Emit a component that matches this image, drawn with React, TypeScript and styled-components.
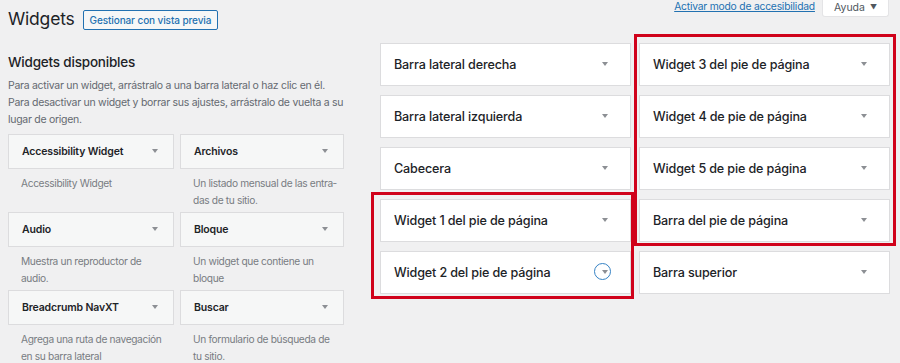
import React from 'react';
import styled, { createGlobalStyle } from 'styled-components';

const GlobalStyle = createGlobalStyle`
  body {
    margin: 0;
    background: #f0f0f1;
    font-family: Inter, "Liberation Sans", sans-serif;
    color: #1d2327;
  }
`;

const Page = styled.div`
  width: 900px;
  height: 363px;
  overflow: hidden;
  padding-left: 8px;
  box-sizing: border-box;
`;

const Header = styled.div`
  display: flex;
  justify-content: space-between;
  align-items: flex-start;
  padding-right: 11px;
`;

const TitleRow = styled.div`
  display: flex;
  align-items: center;
  padding-top: 8px;
`;

const Title = styled.h1`
  margin: 0;
  font-size: 17.5px;
  line-height: 22px;
  font-weight: 400;
  letter-spacing: -0.2px;
`;

const PreviewButton = styled.button`
  margin-left: 8px;
  margin-top: 2px;
  height: 20px;
  padding: 0 6px;
  border: 1px solid #2271b1;
  border-radius: 2px;
  background: #f6f7f7;
  color: #2271b1;
  font-family: inherit;
  font-size: 10px;
  font-weight: 500;
  letter-spacing: -0.1px;
`;

const ScreenMeta = styled.div`
  display: flex;
  align-items: flex-start;
  gap: 7px;
`;

const A11yLink = styled.a`
  color: #2271b1;
  font-size: 10.3px;
  line-height: 12px;
  letter-spacing: -0.2px;
  text-decoration: underline;
  text-underline-offset: 1px;
`;

const HelpTab = styled.div`
  height: 17px;
  padding: 0 11px;
  background: #fff;
  border: 1px solid #e4e4e6;
  border-top: none;
  border-radius: 0 0 3px 3px;
  font-size: 10.5px;
  line-height: 15px;
  color: #50575e;
  box-sizing: border-box;
`;

const Caret = styled.span`
  margin-left: 5px;
  font-size: 7px;
  vertical-align: 1px;
`;

const Main = styled.div`
  display: flex;
  align-items: flex-start;
`;

const LeftCol = styled.div`
  width: 336px;
  margin-right: 36px;
`;

const SubTitle = styled.h2`
  margin: 23px 0 0;
  font-size: 13.5px;
  line-height: 18px;
  font-weight: 500;
  letter-spacing: -0.2px;
`;

const Intro = styled.p`
  margin: 6px 0 6px;
  font-size: 10.5px;
  line-height: 17px;
  letter-spacing: -0.28px;
  color: #646970;
`;

const WidgetGrid = styled.div`
  display: grid;
  grid-template-columns: 166px 164px;
  column-gap: 6px;
`;

const WidgetItem = styled.div`
  height: 78px;
`;

const WidgetTop = styled.div`
  height: 35px;
  display: flex;
  align-items: center;
  justify-content: space-between;
  padding: 0 15px 0 13px;
  background: #f6f7f7;
  border: 1px solid #dcdcde;
  box-sizing: border-box;
  font-size: 10.5px;
  font-weight: 600;
  letter-spacing: -0.15px;
`;

const WidgetDesc = styled.div`
  margin-top: 6px;
  padding: 0 4px 0 13px;
  font-size: 10.2px;
  line-height: 17px;
  letter-spacing: -0.35px;
  color: #787c82;
  hyphens: manual;
`;

const Arrow = styled.span<{ $focused?: boolean }>`
  position: relative;
  width: 0;
  height: 0;
  flex-shrink: 0;
  border-left: 3.5px solid transparent;
  border-right: 3.5px solid transparent;
  border-top: 4.5px solid #8c8f94;
  margin-top: -2px;

  ${(p) =>
    p.$focused &&
    `
    &::after {
      content: '';
      position: absolute;
      left: -11px;
      top: -11px;
      width: 15px;
      height: 15px;
      border: 1.5px solid #3582c4;
      border-radius: 50%;
    }
  `}
`;

const Sidebars = styled.div`
  position: relative;
  margin-top: 13px;
  display: grid;
  grid-template-columns: 251px 251px;
  column-gap: 8px;
`;

const SidebarCol = styled.div`
  display: flex;
  flex-direction: column;
  gap: 9px;
`;

const SidebarCard = styled.div`
  height: 43px;
  display: flex;
  align-items: center;
  justify-content: space-between;
  padding: 0 22px 0 13px;
  background: #fff;
  border: 1px solid #dcdcde;
  box-sizing: border-box;
  font-size: 12.6px;
  font-weight: 500;
  letter-spacing: -0.15px;
`;

const Highlight = styled.div`
  position: absolute;
  border: 3px solid #d0021b;
  box-sizing: border-box;
  pointer-events: none;
`;

const widgets = [
  { name: 'Accessibility Widget', desc: 'Accessibility Widget' },
  { name: 'Archivos', desc: 'Un listado mensual de las entra\u00ADdas de tu sitio.' },
  { name: 'Audio', desc: 'Muestra un reproductor de audio.' },
  { name: 'Bloque', desc: 'Un widget que contiene un bloque' },
  { name: 'Breadcrumb NavXT', desc: 'Agrega una ruta de navegación en su barra lateral' },
  { name: 'Buscar', desc: 'Un formulario de búsqueda de tu sitio.' },
];

const colA = [
  'Barra lateral derecha',
  'Barra lateral izquierda',
  'Cabecera',
  'Widget 1 del pie de página',
  'Widget 2 del pie de página',
];

const colB = [
  'Widget 3 del pie de página',
  'Widget 4 de pie de página',
  'Widget 5 de pie de página',
  'Barra del pie de página',
  'Barra superior',
];

export default function App() {
  return (
    <>
      <GlobalStyle />
      <Page>
        <Header>
          <TitleRow>
            <Title>Widgets</Title>
            <PreviewButton>Gestionar con vista previa</PreviewButton>
          </TitleRow>
          <ScreenMeta>
            <A11yLink href="#">Activar modo de accesibilidad</A11yLink>
            <HelpTab>
              Ayuda<Caret>▼</Caret>
            </HelpTab>
          </ScreenMeta>
        </Header>
        <Main>
          <LeftCol>
            <SubTitle>Widgets disponibles</SubTitle>
            <Intro>
              Para activar un widget, arrástralo a una barra lateral o haz clic en él.
              Para desactivar un widget y borrar sus ajustes, arrástralo de vuelta a su
              lugar de origen.
            </Intro>
            <WidgetGrid>
              {widgets.map((w) => (
                <WidgetItem key={w.name}>
                  <WidgetTop>
                    {w.name}
                    <Arrow />
                  </WidgetTop>
                  <WidgetDesc>{w.desc}</WidgetDesc>
                </WidgetItem>
              ))}
            </WidgetGrid>
          </LeftCol>
          <Sidebars>
            <SidebarCol>
              {colA.map((s, i) => (
                <SidebarCard key={s}>
                  {s}
                  <Arrow $focused={i === 4} />
                </SidebarCard>
              ))}
            </SidebarCol>
            <SidebarCol>
              {colB.map((s) => (
                <SidebarCard key={s}>
                  {s}
                  <Arrow />
                </SidebarCard>
              ))}
            </SidebarCol>
            <Highlight style={{ left: -9, top: 149, width: 263, height: 107 }} />
            <Highlight style={{ left: 254, top: -9, width: 262, height: 212 }} />
          </Sidebars>
        </Main>
      </Page>
    </>
  );
}
